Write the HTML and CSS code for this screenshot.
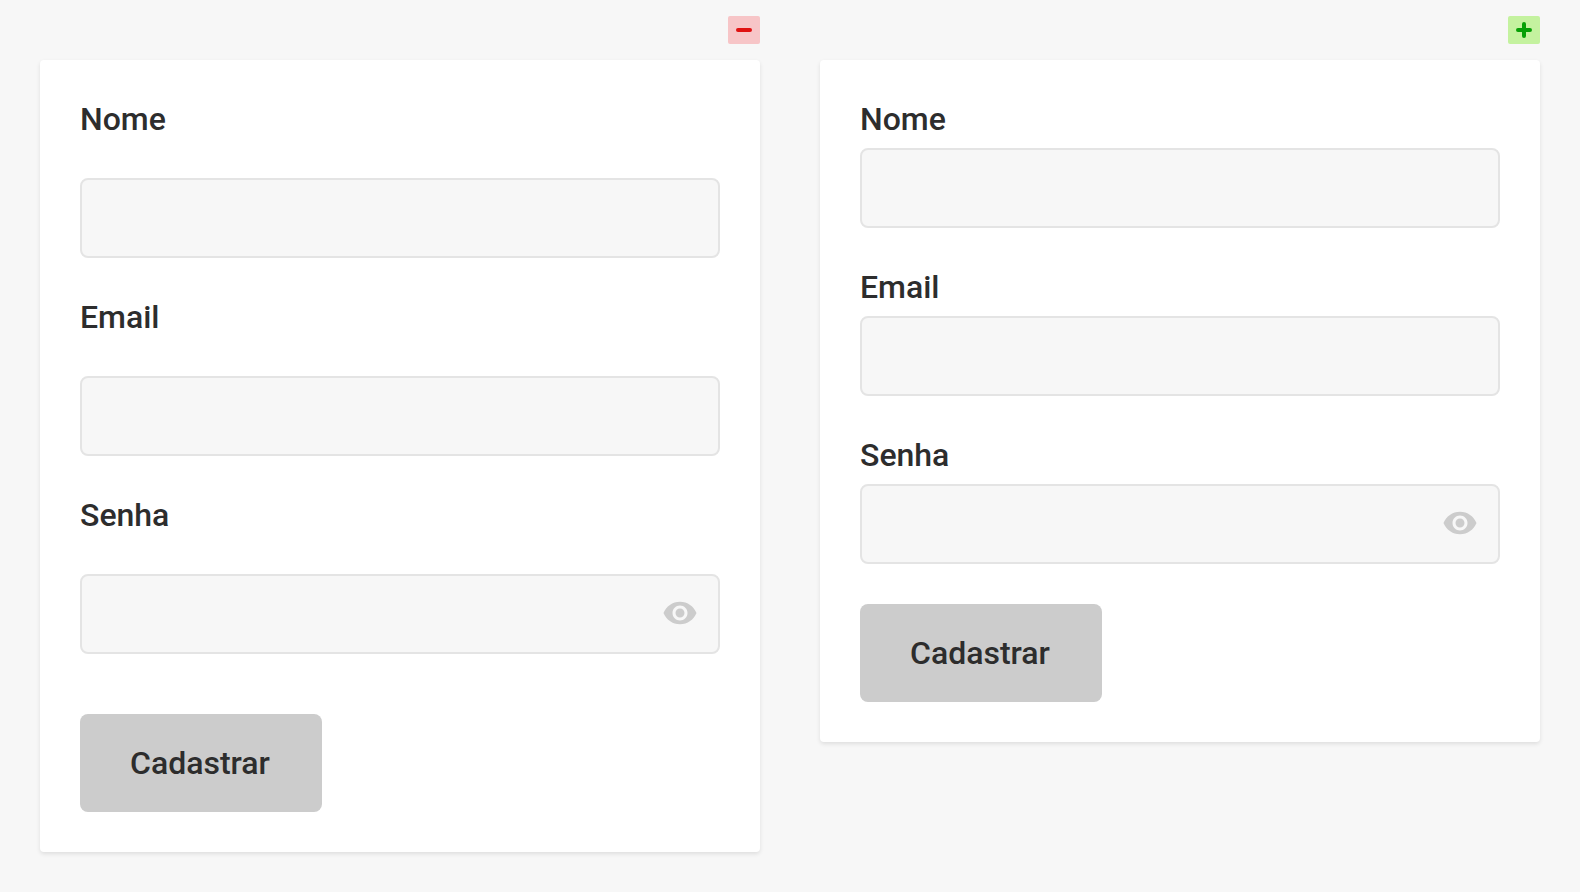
FILE: index.html
```
<!DOCTYPE html>
<html lang="pt-BR">
<head>
<meta charset="utf-8">
<title>Cadastro</title>
<link rel="stylesheet" href="styles.css">
</head>
<body>
<main class="comparison">
  <section class="example example-loose">
    <svg class="mark mark-bad" viewBox="0 0 32 28" role="img" aria-label="Evite"><path d="M10 14h12"/></svg>
    <form class="card">
      <div class="field">
        <label for="nome-a">Nome</label>
        <input id="nome-a" type="text">
      </div>
      <div class="field">
        <label for="email-a">Email</label>
        <input id="email-a" type="email">
      </div>
      <div class="field">
        <label for="senha-a">Senha</label>
        <div class="password">
          <input id="senha-a" type="password">
          <button class="reveal" type="button" aria-label="Mostrar senha"><svg viewBox="0 0 24 24"><path d="M12 4.5C7 4.5 2.730 7.610 1 12c1.730 4.390 6 7.500 11 7.500s9.270-3.110 11-7.500c-1.730-4.390-6-7.500-11-7.500zM12 17c-2.760 0-5-2.240-5-5s2.240-5 5-5 5 2.240 5 5-2.240 5-5 5zm0-8c-1.660 0-3 1.340-3 3s1.340 3 3 3 3-1.340 3-3-1.340-3-3-3z"/></svg></button>
        </div>
      </div>
      <button class="submit" type="button">Cadastrar</button>
    </form>
  </section>
  <section class="example example-tight">
    <svg class="mark mark-good" viewBox="0 0 32 28" role="img" aria-label="Prefira"><path d="M10 14h12M16 8v12"/></svg>
    <form class="card">
      <div class="field">
        <label for="nome-b">Nome</label>
        <input id="nome-b" type="text">
      </div>
      <div class="field">
        <label for="email-b">Email</label>
        <input id="email-b" type="email">
      </div>
      <div class="field">
        <label for="senha-b">Senha</label>
        <div class="password">
          <input id="senha-b" type="password">
          <button class="reveal" type="button" aria-label="Mostrar senha"><svg viewBox="0 0 24 24"><path d="M12 4.5C7 4.5 2.730 7.610 1 12c1.730 4.390 6 7.500 11 7.500s9.270-3.110 11-7.500c-1.730-4.390-6-7.500-11-7.500zM12 17c-2.760 0-5-2.240-5-5s2.240-5 5-5 5 2.240 5 5-2.240 5-5 5zm0-8c-1.660 0-3 1.340-3 3s1.340 3 3 3 3-1.340 3-3-1.340-3-3-3z"/></svg></button>
        </div>
      </div>
      <button class="submit" type="button">Cadastrar</button>
    </form>
  </section>
</main>
</body>
</html>
```
FILE: styles.css
```
* {
  box-sizing: border-box;
}

body {
  margin: 0;
  background: #f7f7f7;
  color: #2d2d2d;
  font: 500 32px/38px Roboto, sans-serif;
}

.comparison {
  display: grid;
  grid-template-columns: 1fr 1fr;
  align-items: start;
  gap: 60px;
  padding: 16px 40px 40px;
}

.example {
  display: flex;
  flex-direction: column;
  gap: 16px;
}

.mark {
  align-self: flex-end;
  width: 32px;
  height: 28px;
  border-radius: 2px;
  fill: none;
  stroke-width: 4;
  stroke-linecap: round;
}

.mark-bad {
  background: #f7c5c7;
  stroke: #e01212;
}

.mark-good {
  background: #c4f29f;
  stroke: #06a006;
}

.card {
  display: flex;
  flex-direction: column;
  align-items: flex-start;
  gap: 40px;
  padding: 40px;
  border-radius: 4px;
  background: #fff;
  box-shadow: 0 2px 4px rgba(0, 0, 0, 0.1);
}

.field {
  display: flex;
  flex-direction: column;
  gap: 10px;
  width: 100%;
}

.example-loose .field {
  gap: 40px;
}

.example-loose .submit {
  margin-top: 20px;
}

input {
  display: block;
  width: 100%;
  height: 80px;
  padding: 0 24px;
  border: 2px solid #e4e4e4;
  border-radius: 8px;
  background: #f7f7f7;
  color: inherit;
  font: inherit;
}

.password {
  position: relative;
}

.password input {
  padding-right: 72px;
}

.reveal {
  position: absolute;
  top: 21px;
  right: 22px;
  padding: 0;
  border: 0;
  background: none;
}

.reveal svg {
  display: block;
  width: 36px;
  height: 36px;
  fill: #ccc;
}

.submit {
  min-width: 242px;
  padding: 30px 50px;
  border: 0;
  border-radius: 8px;
  background: #ccc;
  color: inherit;
  font: inherit;
  text-align: left;
}
```
